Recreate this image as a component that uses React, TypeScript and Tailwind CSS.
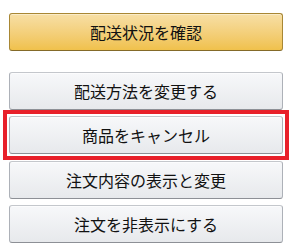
import React from "react";

const grayCls =
  "flex h-[38px] w-[274px] items-center justify-center rounded-[3px] border border-[#adb1b8] border-t-[#c4c7cc] border-b-[#8d9096] bg-gradient-to-b from-[#f7f8fa] to-[#e7e9ec] text-[16px] text-[#111] font-['Noto_Sans_CJK_JP',sans-serif] shadow-[inset_0_1px_0_rgba(255,255,255,0.6)]";

export default function App() {
  return (
    <div className="flex h-[252px] w-[293px] flex-col bg-white pl-[9px] pt-[13px] font-['Noto_Sans_CJK_JP',sans-serif]">
      <button className="flex h-[38px] w-[274px] items-center justify-center rounded-[3px] border border-[#a88734] border-b-[#846a29] bg-gradient-to-b from-[#f7dfa5] to-[#f0c14b] text-[16px] text-[#111] font-['Noto_Sans_CJK_JP',sans-serif] shadow-[inset_0_1px_0_rgba(255,255,255,0.4)]">
        配送状況を確認
      </button>
      <div className="mt-[21px] flex flex-col">
        <button className={grayCls}>配送方法を変更する</button>
        <div className="-mb-[5px] -ml-[6px] mt-0 w-[286px] border-[4px] border-[#e8202a] p-[2px]">
          <button className={grayCls}>商品をキャンセル</button>
        </div>
        <button className={"mt-[6px] " + grayCls}>注文内容の表示と変更</button>
        <button className={"mt-[6px] " + grayCls}>注文を非表示にする</button>
      </div>
    </div>
  );
}
